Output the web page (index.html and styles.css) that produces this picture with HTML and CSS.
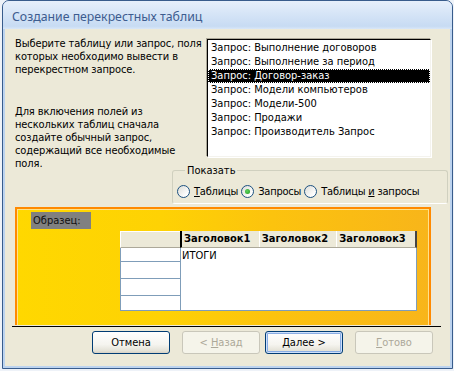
FILE: index.html
```html
<!DOCTYPE html>
<html lang="ru">
<head>
    <meta charset="UTF-8">
    <title>Создание перекрестных таблиц</title>
    <link rel="stylesheet" href="styles.css">
</head>
<body>
    <div class="window">
        <div class="titlebar">Создание перекрестных таблиц</div>

        <div class="client">
            <div class="top">
                <div class="intro">
                    <p>Выберите таблицу или запрос, поля<br>которых необходимо вывести в<br>перекрестном запросе.</p>
                    <p>Для включения полей из<br>нескольких таблиц сначала<br>создайте обычный запрос,<br>содержащий все необходимые<br>поля.</p>
                </div>
                <ul class="source-list">
                    <li>Запрос: Выполнение договоров</li>
                    <li>Запрос: Выполнение за период</li>
                    <li class="selected">Запрос: Договор-заказ</li>
                    <li>Запрос: Модели компьютеров</li>
                    <li>Запрос: Модели-500</li>
                    <li>Запрос: Продажи</li>
                    <li>Запрос: Производитель Запрос</li>
                </ul>
            </div>

            <fieldset class="show-group">
                <legend>Показать</legend>
                <label class="radio"><span class="circle"></span><span><u>Т</u>аблицы</span></label>
                <label class="radio"><span class="circle checked"></span><span>Запросы</span></label>
                <label class="radio"><span class="circle"></span><span>Таблицы <u>и</u> запросы</span></label>
            </fieldset>

            <div class="sample">
                <div class="sample-label">Образец:</div>
                <div class="sheet">
                    <div class="corner"></div>
                    <div class="heads">
                        <span>Заголовок1</span>
                        <span>Заголовок2</span>
                        <span>Заголовок3</span>
                    </div>
                    <div class="row-heads">
                        <div class="r1"></div>
                        <div></div>
                        <div></div>
                        <div class="last"></div>
                    </div>
                    <div class="data">ИТОГИ</div>
                </div>
            </div>

            <div class="separator"></div>

            <div class="buttons">
                <button class="btn">Отмена</button>
                <button class="btn disabled">&lt; <u>Н</u>азад</button>
                <button class="btn default"><u>Д</u>алее &gt;</button>
                <button class="btn disabled"><u>Г</u>отово</button>
            </div>
        </div>
    </div>
</body>
</html>
```

FILE: styles.css
```css
body {
    margin: 0;
    padding: 0;
    background: #eef2f8;
    font-family: "DejaVu Sans Condensed", "DejaVu Sans", sans-serif;
    font-size: 11px;
    color: #000;
}

.window {
    box-sizing: border-box;
    width: 451px;
    height: 369px;
    margin-left: 2px;
    border: 1px solid #385c8c;
    border-radius: 7px 7px 0 0;
    background: #bcd3ef;
    padding: 0 2px 2px 2px;
    display: flex;
    flex-direction: column;
}

.titlebar {
    height: 28px;
    margin: 0 -2px;
    padding-left: 9px;
    border-radius: 6px 6px 0 0;
    background: linear-gradient(#e6effb, #d6e5f7 45%, #c7dbf3 90%, #d9e7f8);
    color: #3d5c8f;
    font-family: "Noto Sans", sans-serif;
    font-size: 12.3px;
    line-height: 31px;
}

.client {
    flex: 1;
    background: #ece9d8;
}

.top {
    box-sizing: border-box;
    height: 128px;
    display: flex;
    padding: 8px 19px 0 10px;
}

.intro {
    flex: 1;
    letter-spacing: -0.1px;
}

.intro p {
    margin: 0 0 29px 0;
    line-height: 13px;
}

.source-list {
    box-sizing: border-box;
    width: 224px;
    height: 118px;
    margin: 2px 0 0 0;
    padding: 1px 0 0 0;
    list-style: none;
    background: #fff;
    border-top: 1px solid #000;
    border-left: 1px solid #000;
    border-right: 1px solid #f4f3ee;
    border-bottom: 1px solid #f4f3ee;
    box-shadow: -1px -1px 0 #aca899, 1px 1px 0 #fff;
}

.source-list li {
    height: 14px;
    line-height: 14px;
    padding-left: 3px;
    white-space: nowrap;
}

.source-list li.selected {
    background: #000;
    color: #fff;
    outline: 1px dotted #fff;
    outline-offset: -1px;
}

.show-group {
    margin: 7px 2px 0 167px;
    padding: 8px 0 5px 4px;
    border: 1px solid #d0d0bf;
    border-bottom-color: #fff;
    border-radius: 3px;
    display: flex;
}

.show-group legend {
    margin-left: 8px;
    padding: 0 2px;
    line-height: 13px;
}

.radio {
    display: flex;
    align-items: center;
    height: 13px;
    margin-right: 3px;
    letter-spacing: -0.2px;
    white-space: nowrap;
}

.circle {
    box-sizing: border-box;
    width: 13px;
    height: 13px;
    margin-right: 4px;
    border-radius: 50%;
    border: 1px solid #1c5180;
    background: linear-gradient(135deg, #dcdcd7, #fff 80%);
    display: flex;
    align-items: center;
    justify-content: center;
}

.circle.checked::after {
    content: "";
    width: 5px;
    height: 5px;
    border-radius: 50%;
    background: radial-gradient(circle at 40% 40%, #5fd35f, #1f9b1f);
}

.sample {
    box-sizing: border-box;
    width: 416px;
    height: 118px;
    margin: 3px 0 0 10px;
    padding: 3px 0 0 14px;
    border: 2px solid #ff8a00;
    border-bottom: none;
    box-shadow: inset 1px 1px 0 #ffe28a, inset -1px 0 0 #ffe28a;
    background: linear-gradient(to right, #ffd800 0%, #fed204 35%, #fcc30e 62%, #f8b51a 100%);
}

.sample-label {
    width: 60px;
    height: 17px;
    line-height: 17px;
    padding-left: 2px;
    box-sizing: border-box;
    background: #808080;
    color: #111;
}

.sheet {
    display: grid;
    grid-template-columns: 60px 237px;
    grid-template-rows: 17px 63px;
    width: 297px;
    margin: 2px 0 0 89px;
}

.corner {
    background: #ece9d8;
    border-top: 1px solid #fff;
    border-left: 1px solid #fff;
    border-bottom: 1px solid #aca899;
}

.heads {
    display: flex;
    background: #ece9d8;
    border-left: 2px solid #000;
    border-right: 2px solid #444;
    border-bottom: 1px solid #aca899;
    font-weight: bold;
}

.heads span {
    box-sizing: border-box;
    width: 79px;
    padding-left: 2px;
    line-height: 16px;
    border-right: 1px solid #fff;
    white-space: nowrap;
}

.heads span:last-child {
    border-right: none;
}

.row-heads {
    display: flex;
    flex-direction: column;
    background: #fff;
    border-left: 1px solid #7f9db9;
}

.row-heads div {
    height: 16px;
    border-bottom: 1px solid #7f9db9;
}

.row-heads .r1 {
    height: 13px;
}

.row-heads .last {
    height: 14px;
}

.data {
    background: #fff;
    border-left: 1px solid #7f9db9;
    border-right: 1px solid #7f9db9;
    border-bottom: 1px solid #7f9db9;
    padding-left: 1px;
    line-height: 15px;
}

.separator {
    width: 429px;
    height: 1px;
    margin: 1px 0 0 7px;
    background: #000;
}

.buttons {
    display: flex;
    margin: 4px 0 0 87px;
}

.btn {
    box-sizing: border-box;
    width: 78px;
    height: 23px;
    margin-right: 12px;
    padding: 0;
    font-family: inherit;
    font-size: 11px;
    color: #000;
    border: 1px solid #003c74;
    border-radius: 3px;
    background: linear-gradient(#fff, #f5f4ef 60%, #e3e1d6 90%, #d6d0c5);
}

.btn:nth-child(2) {
    margin-right: 5px;
}

.btn.default {
    box-shadow: inset 0 0 0 1px #cee0fb, inset 0 0 0 2px #89ade4;
}

.btn.disabled {
    color: #aca899;
    border-color: #c9c7ba;
    background: #f5f4ea;
}
```
